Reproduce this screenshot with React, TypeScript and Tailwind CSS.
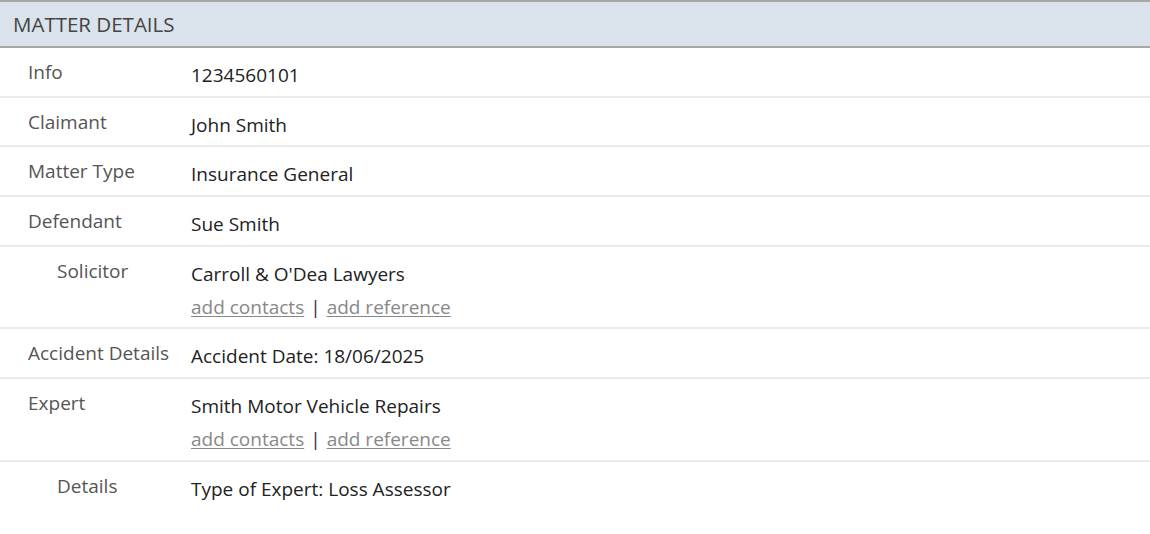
const ROWS: { label: string; value: string; indent?: boolean; links?: boolean }[] = [
  { label: 'Info', value: '1234560101' },
  { label: 'Claimant', value: 'John Smith' },
  { label: 'Matter Type', value: 'Insurance General' },
  { label: 'Defendant', value: 'Sue Smith' },
  { label: 'Solicitor', value: "Carroll & O'Dea Lawyers", indent: true, links: true },
  { label: 'Accident Details', value: 'Accident Date: 18/06/2025' },
  { label: 'Expert', value: 'Smith Motor Vehicle Repairs', links: true },
  { label: 'Details', value: 'Type of Expert: Loss Assessor', indent: true },
];

function LinkRow() {
  return (
    <div className="mt-[9px] text-[#888]">
      <a href="#" className="underline underline-offset-2 decoration-1">add contacts</a>
      <span className="text-[#333] mx-[6px]">|</span>
      <a href="#" className="underline underline-offset-2 decoration-1">add reference</a>
    </div>
  );
}

export default function App() {
  return (
    <div className="w-[1150px] h-[534px] bg-white font-['Open_Sans',sans-serif] text-[19px] leading-6">
      <div className="h-12 border-t-2 border-b-2 border-[#a9a9a9] bg-[#dae3ec] px-[13px] flex items-center text-[20.5px] text-[#444]">
        MATTER DETAILS
      </div>
      {ROWS.map((row, i) => (
        <div
          key={row.label}
          className={`flex pb-[8.7px] ${i < ROWS.length - 1 ? 'border-b-2 border-[#ebebeb]' : ''}`}
        >
          <div className={`w-[191px] shrink-0 pt-3 text-[#555] ${row.indent ? 'pl-[57px]' : 'pl-[28px]'}`}>
            {row.label}
          </div>
          <div className="pt-[15px] text-[#222]">
            <div>{row.value}</div>
            {row.links && <LinkRow />}
          </div>
        </div>
      ))}
    </div>
  );
}
